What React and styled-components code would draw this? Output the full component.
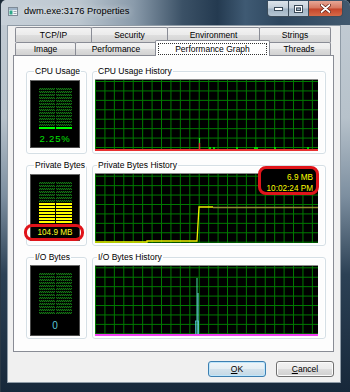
import React from "react";
import styled, { createGlobalStyle } from "styled-components";

const GlobalStyle = createGlobalStyle`
  html, body {
    margin: 0;
    padding: 0;
    background: #1b2a38;
  }
  body {
    font-family: "Liberation Sans", Arial, sans-serif;
  }
`;

const Window = styled.div`
  width: 350px;
  height: 392px;
  box-sizing: border-box;
  display: flex;
  flex-direction: column;
  border-left: 1px solid #2a3845;
  border-radius: 6px 6px 0 0;
  overflow: hidden;
  background: linear-gradient(180deg, #c3ccd4 0%, #b7c2cb 30%, #7d8fa0 50%, #2c4155 70%, #17283a 100%);
`;

const TitleBar = styled.div`
  height: 25px;
  flex: none;
  display: flex;
  align-items: flex-start;
  background: linear-gradient(90deg, #c7d0d8 0%, #bcc7d0 22%, #8a9bab 38%, #3b5166 52%, #243a50 62%, #3f5a73 70%, #2d465e 80%, #41596f 100%);
`;

const TitleIcon = styled.svg`
  margin: 7px 6px 0 7px;
  flex: none;
`;

const Caption = styled.div`
  font-size: 9.3px;
  line-height: 12px;
  margin-top: 5px;
  color: #000;
  flex: 1;
  text-shadow: 0 0 6px rgba(255, 255, 255, 0.9);
`;

const CaptionButtons = styled.div`
  display: flex;
  margin: 1px 7px 0 0;
  border: 1px solid #3c4c5a;
  border-top: none;
  border-radius: 0 0 4px 4px;
  overflow: hidden;
`;

const CapButton = styled.div`
  width: ${(p) => p.w}px;
  height: 15px;
  display: flex;
  align-items: center;
  justify-content: center;
  border-left: ${(p) => (p.first ? "none" : "1px solid #3c4c5a")};
  background: ${(p) =>
    p.close
      ? "linear-gradient(180deg, #e7a796 0%, #d6765e 48%, #c4442a 52%, #d66a48 100%)"
      : "linear-gradient(180deg, #dde4ea 0%, #c3cfda 48%, #9fb2c3 52%, #b6c6d3 100%)"};
`;

const FrameBody = styled.div`
  flex: 1;
  display: flex;
  padding: 0 9px 9px 6px;
`;

const Client = styled.div`
  flex: 1;
  display: flex;
  flex-direction: column;
  background: #f0f0f0;
  border: 1px solid #8f9ba6;
  padding: 1px 6px 5px 5px;
`;

const TabRow = styled.div`
  display: flex;
  margin: 0 2px;
  height: ${(p) => p.h}px;
`;

const Tab = styled.div`
  box-sizing: border-box;
  width: ${(p) => p.w}px;
  height: ${(p) => (p.active ? p.h + 3 : p.h)}px;
  margin: ${(p) => (p.active ? "-2px -2px 0 -2px" : "0 0 0 -1px")};
  position: relative;
  z-index: ${(p) => (p.active ? 2 : 1)};
  display: flex;
  align-items: center;
  justify-content: center;
  font-size: 8.5px;
  color: #000;
  border: 1px solid #898c95;
  border-bottom: none;
  border-radius: 2px 2px 0 0;
  padding: ${(p) => (p.active ? "2px 2px 1px" : "0")};
  background: ${(p) =>
    p.active
      ? "#ffffff"
      : "linear-gradient(180deg, #f3f3f3 0%, #ebebeb 48%, #dedede 52%, #d2d2d2 100%)"};
  &:first-child {
    margin-left: 0;
  }
`;

const FocusRect = styled.span`
  flex: 1;
  align-self: stretch;
  display: flex;
  align-items: center;
  justify-content: center;
  border: 1px dotted #333;
`;

const Panel = styled.div`
  width: 321px;
  height: 297px;
  box-sizing: border-box;
  border: 1px solid #898c95;
  background: #fdfdfd;
  display: grid;
  grid-template-columns: 61px 234px;
  grid-template-rows: auto auto auto;
  align-content: start;
  column-gap: 5px;
  row-gap: 6px;
  padding: 10px 8px 0 12px;
`;

const Group = styled.fieldset`
  margin: 0;
  min-width: 0;
  box-sizing: border-box;
  border: 1px solid #d5dfe5;
  border-radius: 3px;
  padding: 3px ${(p) => p.pr}px 2px ${(p) => p.pl}px;
  box-shadow: inset 0 0 0 1px #ffffff;
`;

const Legend = styled.legend`
  font-size: 8.5px;
  line-height: 10px;
  padding: 0 1px;
  margin-left: ${(p) => p.ml}px;
  color: #000;
  white-space: nowrap;
`;

const MeterBox = styled.div`
  position: relative;
  box-sizing: border-box;
  width: 50px;
  height: ${(p) => p.h}px;
  margin-top: ${(p) => p.mt}px;
  background: #000;
  border: 1px solid #4a4a4a;
  border-top-color: #6a6a6a;
  display: flex;
  flex-direction: column;
  align-items: center;
`;

const MeterValue = styled.div`
  flex: 1;
  display: flex;
  align-items: center;
  justify-content: center;
  color: ${(p) => p.color};
  font-size: ${(p) => p.size}px;
  letter-spacing: ${(p) => p.ls}px;
  line-height: 10px;
`;

const GraphBox = styled.div`
  position: relative;
  box-sizing: border-box;
  height: ${(p) => p.h}px;
  background: #000;
  border-top: 1px solid #8a8a8a;
`;

const Annotation = styled.div`
  position: absolute;
  box-sizing: border-box;
  left: ${(p) => p.l}px;
  top: ${(p) => p.t}px;
  width: ${(p) => p.w}px;
  height: ${(p) => p.hh}px;
  border: 3px solid #e0141a;
  border-radius: 8px;
`;

const HistoryLabel = styled.div`
  position: absolute;
  box-sizing: border-box;
  right: -1px;
  top: -8px;
  width: 61px;
  height: 29px;
  border: 3px solid #e0141a;
  border-radius: 8px;
  background: #000;
  padding: 4px 3px 0 0;
  text-align: right;
  color: #ffff00;
  font-size: 8.2px;
  line-height: 10.5px;
`;

const ButtonRow = styled.div`
  margin-top: auto;
  display: flex;
  justify-content: flex-end;
  gap: 10px;
`;

const Button = styled.div`
  box-sizing: border-box;
  width: 58px;
  height: 16px;
  display: flex;
  align-items: center;
  justify-content: center;
  font-size: 8.5px;
  color: #000;
  border: 1px solid ${(p) => (p.primary ? "#3c7fb1" : "#707070")};
  border-radius: 3px;
  box-shadow: inset 0 0 0 1px ${(p) => (p.primary ? "#bfe6fb" : "#fbfbfb")};
  background: ${(p) =>
    p.primary
      ? "linear-gradient(180deg, #eef5f9 0%, #e4eef4 48%, #d3e2ec 52%, #c4d8e5 100%)"
      : "linear-gradient(180deg, #f2f2f2 0%, #ebebeb 48%, #dddddd 52%, #cfcfcf 100%)"};
`;

const STEP = 9.43;

function Grid({ w, h, oy }) {
  const lines = [];
  for (let x = 0.5; x < w; x += STEP) {
    lines.push(<line key={"v" + x} x1={x} y1={0} x2={x} y2={h} />);
  }
  for (let y = oy; y < h; y += STEP) {
    lines.push(<line key={"h" + y} x1={0} y1={y} x2={w} y2={y} />);
  }
  return (
    <g stroke="#007a00" strokeWidth="1">
      {lines}
    </g>
  );
}

function Meter({ h, mt, fill, fillColor, value, color, size, ls, children }) {
  const rows = [];
  for (let i = 0; i < 14; i++) {
    const y = 7 + i * 3;
    const lit = i >= 14 - fill;
    const c = lit ? fillColor : "url(#dim)";
    rows.push(<rect key={"a" + i} x={8} y={y} width={16} height={2} fill={c} />);
    rows.push(<rect key={"b" + i} x={25} y={y} width={16} height={2} fill={c} />);
  }
  return (
    <MeterBox h={h} mt={mt}>
      <svg width="48" height="50">
        <defs>
          <pattern id="dim" width="2" height="2" patternUnits="userSpaceOnUse">
            <rect width="2" height="2" fill="#042a04" />
            <rect width="1" height="1" fill="#167216" />
            <rect x="1" y="1" width="1" height="1" fill="#167216" />
          </pattern>
        </defs>
        {rows}
      </svg>
      <MeterValue color={color} size={size} ls={ls}>
        {value}
      </MeterValue>
      {children}
    </MeterBox>
  );
}

function CpuGraph() {
  const w = 223;
  const h = 71;
  const ticks = [114, 118, 141, 159, 161, 179, 212];
  return (
    <svg width={w} height={h} style={{ display: "block" }}>
      <Grid w={w} h={h} oy={1.5} />
      {ticks.map((x) => (
        <rect key={x} x={x} y={h - 4} width={2} height={2} fill="#00d000" />
      ))}
      <line x1={104.5} y1={h} x2={104.5} y2={58} stroke="#20e020" strokeWidth="1.2" />
      <line x1={104.5} y1={h} x2={104.5} y2={63} stroke="#e03030" strokeWidth="1.4" />
      <rect x={0} y={h - 2} width={w} height={2} fill="#e83030" />
    </svg>
  );
}

function PrivateGraph() {
  const w = 223;
  const h = 69;
  return (
    <svg width={w} height={h} style={{ display: "block" }}>
      <Grid w={w} h={h} oy={2.2} />
      <polyline
        points={`0,${h - 1} 52,${h - 1} 52,${h - 2} 102,${h - 2} 104,33 118,33`}
        fill="none"
        stroke="#f0f000"
        strokeWidth="1.3"
      />
      <line x1={118} y1={33.5} x2={w} y2={33.5} stroke="#8c8c2c" strokeWidth="1.6" />
    </svg>
  );
}

function IoGraph() {
  const w = 223;
  const h = 70;
  return (
    <svg width={w} height={h} style={{ display: "block" }}>
      <Grid w={w} h={h} oy={1.8} />
      <rect x={100.5} y={h - 15} width={3} height={15} fill="none" stroke="#50c8d8" strokeWidth="0.8" />
      <line x1={102} y1={h} x2={102} y2={12} stroke="#3cc08c" strokeWidth="1.2" />
      <line x1={103} y1={h} x2={103} y2={27} stroke="#6ad2e2" strokeWidth="1" />
      <rect x={0} y={h - 2} width={w} height={2} fill="#f040f0" />
    </svg>
  );
}

const rowTabs1 = [
  { label: "TCP/IP", w: 77 },
  { label: "Security", w: 77 },
  { label: "Environment", w: 93 },
  { label: "Strings", w: 72 },
];

const rowTabs2 = [
  { label: "Image", w: 61 },
  { label: "Performance", w: 82 },
  { label: "Performance Graph", w: 115, active: true },
  { label: "Threads", w: 64 },
];

export default function App() {
  return (
    <>
      <GlobalStyle />
      <Window>
        <TitleBar>
          <TitleIcon width="10" height="9" viewBox="0 0 10 9">
            <rect x="0.5" y="0.5" width="9" height="8" fill="#f4f6f8" stroke="#7d8a96" />
            <rect x="1" y="1" width="8" height="2" fill="#9fb4c8" />
            <rect x="1.5" y="3.5" width="3" height="4" fill="#2fa88a" />
            <rect x="5.5" y="4" width="3" height="1" fill="#9aa6b2" />
            <rect x="5.5" y="6" width="3" height="1" fill="#9aa6b2" />
          </TitleIcon>
          <Caption>dwm.exe:3176 Properties</Caption>
          <CaptionButtons>
            <CapButton w={20} first>
              <svg width="9" height="4">
                <rect x="0.5" y="0.5" width="8" height="3" fill="#fff" stroke="#3a4a58" />
              </svg>
            </CapButton>
            <CapButton w={19}>
              <svg width="9" height="8">
                <rect x="0.5" y="0.5" width="8" height="7" fill="none" stroke="#3a4a58" />
                <rect x="1.5" y="1.5" width="6" height="5" fill="none" stroke="#fff" />
                <rect x="2.5" y="3" width="4" height="2.5" fill="none" stroke="#3a4a58" />
              </svg>
            </CapButton>
            <CapButton w={33} close>
              <svg width="11" height="9" viewBox="0 0 11 9">
                <path d="M1.5 1 L9.5 8 M9.5 1 L1.5 8" stroke="#5a1408" strokeWidth="3.2" strokeLinecap="round" />
                <path d="M1.5 1 L9.5 8 M9.5 1 L1.5 8" stroke="#fff" strokeWidth="1.8" strokeLinecap="round" />
              </svg>
            </CapButton>
          </CaptionButtons>
        </TitleBar>
        <FrameBody>
          <Client>
            <TabRow h={15}>
              {rowTabs1.map((t) => (
                <Tab key={t.label} w={t.w} h={15}>
                  {t.label}
                </Tab>
              ))}
            </TabRow>
            <TabRow h={13}>
              {rowTabs2.map((t) =>
                t.active ? (
                  <Tab key={t.label} w={t.w} h={13} active>
                    <FocusRect>{t.label}</FocusRect>
                  </Tab>
                ) : (
                  <Tab key={t.label} w={t.w} h={13}>
                    {t.label}
                  </Tab>
                )
              )}
            </TabRow>
            <Panel>
              <Group pl={3} pr={5}>
                <Legend ml={4}>CPU Usage</Legend>
                <Meter h={68} mt={1} fill={1} fillColor="#00ff00" value="2.25%" color="#00e400" size={9.5} ls={0.8} />
              </Group>
              <Group pl={2} pr={7}>
                <Legend ml={2}>CPU Usage History</Legend>
                <GraphBox h={72}>
                  <CpuGraph />
                </GraphBox>
              </Group>

              <Group pl={3} pr={5}>
                <Legend ml={4}>Private Bytes</Legend>
                <Meter h={67} mt={1} fill={7} fillColor="#ffff00" value="104.9 MB" color="#ffff20" size={8.2} ls={0}>
                  <Annotation l={-7} t={49} w={60} hh={17} />
                </Meter>
              </Group>
              <Group pl={2} pr={7}>
                <Legend ml={2}>Private Bytes History</Legend>
                <GraphBox h={70}>
                  <PrivateGraph />
                  <HistoryLabel>
                    6.9 MB
                    <br />
                    10:02:24 PM
                  </HistoryLabel>
                </GraphBox>
              </Group>

              <Group pl={3} pr={5}>
                <Legend ml={4}>I/O Bytes</Legend>
                <Meter h={71} mt={0} fill={0} fillColor="#00ff00" value="0" color="#5cc6d6" size={10} ls={0} />
              </Group>
              <Group pl={2} pr={7}>
                <Legend ml={2}>I/O Bytes History</Legend>
                <GraphBox h={71}>
                  <IoGraph />
                </GraphBox>
              </Group>
            </Panel>
            <ButtonRow>
              <Button primary>
                <span>
                  <u>O</u>K
                </span>
              </Button>
              <Button>
                <span>
                  <u>C</u>ancel
                </span>
              </Button>
            </ButtonRow>
          </Client>
        </FrameBody>
      </Window>
    </>
  );
}
